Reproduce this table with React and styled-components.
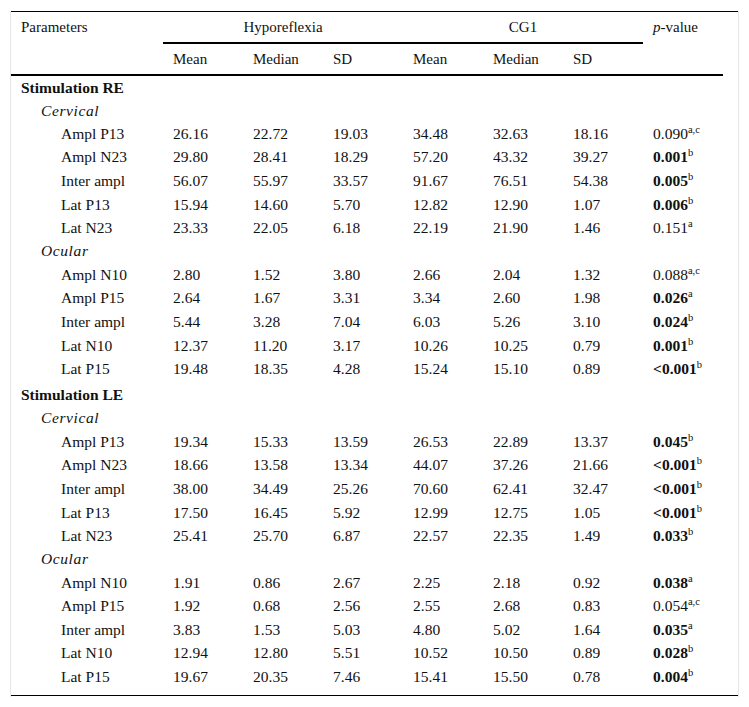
import React from 'react';
import styled, { createGlobalStyle } from 'styled-components';

const GlobalStyle = createGlobalStyle`
	html, body {
		margin: 0;
		padding: 0;
		background: #ffffff;
	}
	body {
		font-family: 'Liberation Serif', 'Times New Roman', serif;
		color: #111111;
	}
`;

const groups = [
	{
		title: 'Stimulation RE',
		sections: [
			{
				name: 'Cervical',
				rows: [
					['Ampl P13', '26.16', '22.72', '19.03', '34.48', '32.63', '18.16', '0.090', 'a,c', false],
					['Ampl N23', '29.80', '28.41', '18.29', '57.20', '43.32', '39.27', '0.001', 'b', true],
					['Inter ampl', '56.07', '55.97', '33.57', '91.67', '76.51', '54.38', '0.005', 'b', true],
					['Lat P13', '15.94', '14.60', '5.70', '12.82', '12.90', '1.07', '0.006', 'b', true],
					['Lat N23', '23.33', '22.05', '6.18', '22.19', '21.90', '1.46', '0.151', 'a', false],
				],
			},
			{
				name: 'Ocular',
				rows: [
					['Ampl N10', '2.80', '1.52', '3.80', '2.66', '2.04', '1.32', '0.088', 'a,c', false],
					['Ampl P15', '2.64', '1.67', '3.31', '3.34', '2.60', '1.98', '0.026', 'a', true],
					['Inter ampl', '5.44', '3.28', '7.04', '6.03', '5.26', '3.10', '0.024', 'b', true],
					['Lat N10', '12.37', '11.20', '3.17', '10.26', '10.25', '0.79', '0.001', 'b', true],
					['Lat P15', '19.48', '18.35', '4.28', '15.24', '15.10', '0.89', '<0.001', 'b', true],
				],
			},
		],
	},
	{
		title: 'Stimulation LE',
		sections: [
			{
				name: 'Cervical',
				rows: [
					['Ampl P13', '19.34', '15.33', '13.59', '26.53', '22.89', '13.37', '0.045', 'b', true],
					['Ampl N23', '18.66', '13.58', '13.34', '44.07', '37.26', '21.66', '<0.001', 'b', true],
					['Inter ampl', '38.00', '34.49', '25.26', '70.60', '62.41', '32.47', '<0.001', 'b', true],
					['Lat P13', '17.50', '16.45', '5.92', '12.99', '12.75', '1.05', '<0.001', 'b', true],
					['Lat N23', '25.41', '25.70', '6.87', '22.57', '22.35', '1.49', '0.033', 'b', true],
				],
			},
			{
				name: 'Ocular',
				rows: [
					['Ampl N10', '1.91', '0.86', '2.67', '2.25', '2.18', '0.92', '0.038', 'a', true],
					['Ampl P15', '1.92', '0.68', '2.56', '2.55', '2.68', '0.83', '0.054', 'a,c', false],
					['Inter ampl', '3.83', '1.53', '5.03', '4.80', '5.02', '1.64', '0.035', 'a', true],
					['Lat N10', '12.94', '12.80', '5.51', '10.52', '10.50', '0.89', '0.028', 'b', true],
					['Lat P15', '19.67', '20.35', '7.46', '15.41', '15.50', '0.78', '0.004', 'b', true],
				],
			},
		],
	},
];

const App = () => {
	return (
		<Page>
			<GlobalStyle />
			<Frame>
				<Table>
					<colgroup>
						<col style={{ width: '152px' }} />
						<col span={7} style={{ width: '80px' }} />
						<col />
					</colgroup>
					<thead>
						<tr>
							<HeadCell rowSpan={2}>Parameters</HeadCell>
							<GroupCell colSpan={3}>Hyporeflexia</GroupCell>
							<GroupCell colSpan={3}>CG1</GroupCell>
							<HeadCell rowSpan={2}>
								<i>p</i>-value
							</HeadCell>
						</tr>
						<tr>
							{['Mean', 'Median', 'SD', 'Mean', 'Median', 'SD'].map((h, i) => (
								<SubCell key={i}>{h}</SubCell>
							))}
						</tr>
					</thead>
					<tbody>
						{groups.map((g, gi) => (
							<React.Fragment key={g.title}>
								<TitleRow spaced={gi > 0}>
									<td colSpan={8}>{g.title}</td>
								</TitleRow>
								{g.sections.map((s) => (
									<React.Fragment key={s.name}>
										<SectionRow>
											<td colSpan={8}>{s.name}</td>
										</SectionRow>
										{s.rows.map((r, i) => (
											<DataRow key={i}>
												<Label>{r[0]}</Label>
												{r.slice(1, 7).map((v, j) => (
													<Cell key={j}>{v}</Cell>
												))}
												<Cell>
													<PValue bold={r[9]}>{r[7]}</PValue>
													<Sup>{r[8]}</Sup>
												</Cell>
											</DataRow>
										))}
									</React.Fragment>
								))}
							</React.Fragment>
						))}
					</tbody>
				</Table>
			</Frame>
		</Page>
	);
};

const Page = styled.div`
	padding: 11px 10px 0 10px;
	width: 729px;
`;

const Frame = styled.div`
	width: 729px;
	border-left: 1px solid #e6e6e6;
	border-right: 1px solid #e6e6e6;
	box-sizing: border-box;
	padding-bottom: 1px;
`;

const Table = styled.table`
	width: 727px;
	border-collapse: collapse;
	table-layout: fixed;
	font-size: 15.5px;
	border-top: 1px solid #000;
	border-bottom: 1px solid #000;

	td,
	th {
		text-align: left;
		font-weight: normal;
		padding: 0 0 0 10px;
		white-space: nowrap;
	}

	tbody tr:last-child td {
		padding-bottom: 6px;
	}
`;

const HeadCell = styled.th`
	vertical-align: top;
	padding-top: 7px !important;
	font-size: 15px;
	border-bottom: 2px solid #000;
`;

const GroupCell = styled.th`
	text-align: center !important;
	height: 29px;
	font-size: 15px;
	border-bottom: 2px solid #000;
	vertical-align: middle;
	padding: 1px 0 0 0 !important;
`;

const SubCell = styled.th`
	height: 29px;
	font-size: 15px;
	vertical-align: middle;
	border-bottom: 2px solid #000;
	padding-top: 1px !important;
`;

const TitleRow = styled.tr`
	td {
		font-weight: bold;
		height: 23px;
		padding-top: ${(p) => (p.spaced ? '3px' : '0')} !important;
		vertical-align: middle;
	}
`;

const SectionRow = styled.tr`
	td {
		font-style: italic;
		letter-spacing: 0.6px;
		padding-left: 30px !important;
		height: 23px;
		vertical-align: middle;
	}
`;

const DataRow = styled.tr`
	td {
		height: 23.6px;
		vertical-align: middle;
	}
`;

const Label = styled.td`
	padding-left: 50px !important;
`;

const Cell = styled.td``;

const PValue = styled.span`
	font-weight: ${(p) => (p.bold ? 'bold' : 'normal')};
`;

const Sup = styled.sup`
	font-size: 10.5px;
	line-height: 0;
	vertical-align: 6px;
`;

export default App;
